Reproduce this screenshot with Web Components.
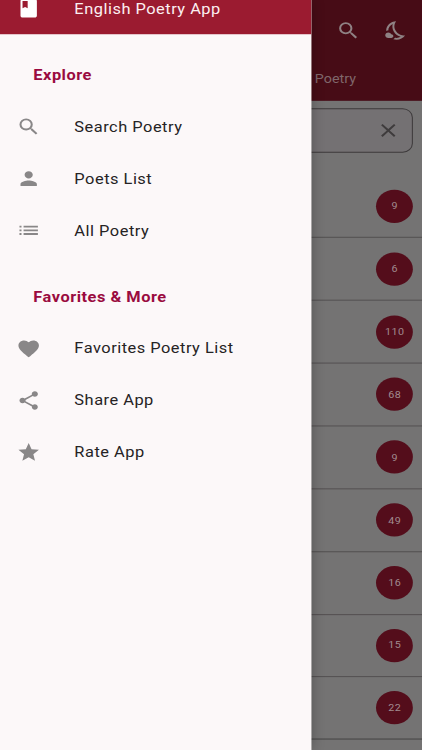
<!DOCTYPE html>
<html lang="en"><head><meta charset="utf-8"><title>English Poetry App</title>
<style>html,body{margin:0;width:422px;height:750px;overflow:hidden;background:#747373}</style></head>
<body><poetry-app></poetry-app>
<script>
const ICONS={
search:'M15.5 14h-.79l-.28-.27A6.47 6.47 0 0 0 16 9.5 6.5 6.5 0 1 0 9.5 16c1.61 0 3.09-.59 4.23-1.57l.27.28v.79l5 4.99L20.49 19l-4.99-5zm-6 0C7.01 14 5 11.99 5 9.5S7.01 5 9.5 5 14 7.01 14 9.5 11.99 14 9.5 14z',
book:'M18 2H6c-1.1 0-2 .9-2 2v16c0 1.1.9 2 2 2h12c1.1 0 2-.9 2-2V4c0-1.1-.9-2-2-2zM6 4h5v8l-2.5-1.5L6 12V4z',
person:'M12 12c2.21 0 4-1.79 4-4s-1.79-4-4-4-4 1.79-4 4 1.79 4 4 4zm0 2c-2.67 0-8 1.34-8 4v2h16v-2c0-2.66-5.33-4-8-4z',
list:'M3 13h2v-2H3v2zm0 4h2v-2H3v2zm0-8h2V7H3v2zm4 4h14v-2H7v2zm0 4h14v-2H7v2zM7 7v2h14V7H7z',
heart:'M12 21.35l-1.45-1.32C5.4 15.36 2 12.28 2 8.5 2 5.42 4.42 3 7.5 3c1.74 0 3.41.81 4.5 2.09C13.09 3.81 14.76 3 16.5 3 19.58 3 22 5.42 22 8.5c0 3.78-3.4 6.86-8.55 11.54L12 21.35z',
share:'M18 16.08c-.76 0-1.44.3-1.96.77L8.91 12.7c.05-.23.09-.46.09-.7s-.04-.47-.09-.7l7.05-4.11c.54.5 1.25.81 2.04.81 1.66 0 3-1.34 3-3s-1.34-3-3-3-3 1.34-3 3c0 .24.04.47.09.7L8.04 9.81C7.5 9.31 6.79 9 6 9c-1.66 0-3 1.34-3 3s1.34 3 3 3c.79 0 1.5-.31 2.04-.81l7.12 4.16c-.05.21-.08.43-.08.65 0 1.61 1.31 2.92 2.92 2.92s2.92-1.31 2.92-2.92-1.31-2.92-2.92-2.92z',
star:'M12 17.27L18.18 21l-1.64-7.03L22 9.24l-7.19-.61L12 2 9.19 8.63 2 9.24l5.46 4.73L5.82 21z',
close:'M19 6.41L17.59 5 12 10.59 6.41 5 5 6.41 10.59 12 5 17.59 6.41 19 12 13.41 17.59 19 19 17.59 13.41 12z',
night:'M19.78 17.51c-2.47 0-6.57-1.33-8.68-5.43C8.77 7.57 10.6 3.6 11.63 2.01 6.27 2.2 1.98 6.59 1.98 12c0 .14.02.28.02.42.61-.26 1.28-.42 1.98-.42 0-3.09 1.73-5.77 4.3-7.1C7.8 7.15 7.79 10 9.33 13c1.57 3.04 4.18 4.95 6.8 5.86-1.23.74-2.65 1.15-4.13 1.15-.5 0-1-.05-1.48-.14-.37.7-.94 1.27-1.64 1.64.98.32 2.03.5 3.11.5 3.5 0 6.58-1.8 8.37-4.52-.18.01-.38.02-.58.02zM7 16h-.18C6.4 14.84 5.3 14 4 14c-1.66 0-3 1.34-3 3s1.34 3 3 3h3c1.1 0 2-.9 2-2s-.9-2-2-2z'
};
function define(name,render){
  customElements.define(name,class extends HTMLElement{
    connectedCallback(){ if(!this.shadowRoot) this.attachShadow({mode:'open'}).innerHTML=render(this); }
  });
}
define('app-icon',e=>`<style>:host{display:block;width:24px;height:24px;flex:none}svg{display:block;width:100%;height:100%;fill:currentColor}</style><svg viewBox="0 0 24 24"><path d="${ICONS[e.getAttribute('name')]}"/></svg>`);
define('nav-tile',e=>`<style>:host{display:flex;align-items:center;height:56px;box-sizing:border-box;padding:0 16.3px;gap:32.3px;font-size:16px;letter-spacing:.49px;color:#252324;white-space:nowrap}app-icon{color:var(--icon,#898788)}span{padding-top:.4px}</style><app-icon name="${e.getAttribute('icon')}"></app-icon><span><slot></slot></span>`);
define('nav-section',e=>`<style>:host{display:block}h2{margin:0;height:71.7px;box-sizing:border-box;padding:34.3px 0 0 32.5px;font-size:16px;line-height:19px;letter-spacing:.5px;font-weight:700;color:#9a0b40;white-space:nowrap}</style><h2>${e.getAttribute('heading')}</h2><slot></slot>`);
define('nav-drawer',()=>`<style>:host{display:block;width:304.2px;height:810.8px;background:#fcf8f9;box-shadow:0 0 14px rgba(0,0,0,.32);overflow:hidden}
header{height:37.3px;background:#9b1b30;display:flex;flex-direction:column;justify-content:flex-end;overflow:hidden}header nav-tile{flex:none;color:#fbeff1;--icon:#fff}</style>
<header><nav-tile icon="book">English Poetry App</nav-tile></header>
<nav-section heading="Explore"><nav-tile icon="search">Search Poetry</nav-tile><nav-tile icon="person">Poets List</nav-tile><nav-tile icon="list">All Poetry</nav-tile></nav-section>
<nav-section heading="Favorites &amp; More"><nav-tile icon="heart">Favorites Poetry List</nav-tile><nav-tile icon="share">Share App</nav-tile><nav-tile icon="star">Rate App</nav-tile></nav-section>`);
define('top-bar',()=>`<style>:host{display:block;height:108.8px;box-sizing:border-box;background:#470c16;color:#8f8284}.actions{display:flex;justify-content:flex-end;gap:22.6px;padding:21px 13.1px 0 0}.tab{display:flex;padding:31.8px 0 0 307.3px;font-size:14px;line-height:16px;color:#80676b}</style>
<div class="actions"><app-icon name="search"></app-icon><app-icon name="night"></app-icon></div><div class="tab">Poetry</div>`);
define('search-field',()=>`<style>:host{display:flex;align-items:center;justify-content:flex-end;height:48px;box-sizing:border-box;margin:8.4px 8.6px 0;padding-right:11px;border:1.2px solid #3d3a3b;border-radius:10px;background:#747173;color:#3e3b3c}</style><app-icon name="close"></app-icon>`);
define('count-row',()=>`<style>:host{display:flex;align-items:center;justify-content:flex-end;height:67.9px;box-sizing:border-box;padding-right:8.6px;border-bottom:1.2px solid #504d4e}:host(:last-child){border-bottom:2px solid #595858}span{width:36px;height:36px;border-radius:50%;background:#540d1b;color:#a18b8f;display:grid;place-items:center;font-size:10.5px;letter-spacing:.4px}</style><span><slot></slot></span>`);
define('poetry-app',()=>`<style>:host{display:grid;width:411.9px;height:810.8px;margin-bottom:-60.8px;transform:scale(1.0245,.925);transform-origin:0 0;font-family:Roboto,sans-serif;overflow:hidden}
main,nav-drawer{grid-area:1/1}main{height:810.8px;overflow:hidden;background:#747373}.rows{padding-top:24.1px}</style>
<main><top-bar></top-bar><search-field></search-field><div class="rows">${[9,6,110,68,9,49,16,15,22].map(n=>`<count-row>${n}</count-row>`).join('')}</div></main><nav-drawer></nav-drawer>`);
</script></body></html>
